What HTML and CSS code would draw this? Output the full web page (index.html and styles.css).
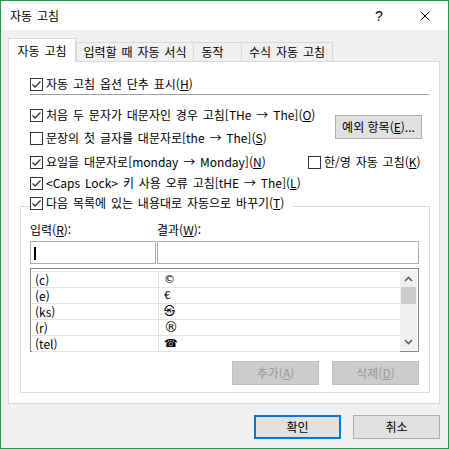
FILE: index.html
```html
<!DOCTYPE html>
<html lang="ko">
<head>
    <meta charset="UTF-8">
    <title>자동 고침</title>
    <link rel="stylesheet" href="styles.css">
</head>
<body>
    <div class="window">
        <div class="titlebar">
            <span class="title">자동 고침</span>
            <span class="cap-btn help">?</span>
            <span class="cap-btn close">
                <svg viewBox="0 0 10 10"><path d="M0.5 0.5l9 9M9.5 0.5l-9 9"/></svg>
            </span>
        </div>

        <div class="body">
            <div class="tabs">
                <div class="tab active tab-auto">자동 고침</div>
                <div class="tab tab-typing">입력할 때 자동 서식</div>
                <div class="tab tab-action">동작</div>
                <div class="tab tab-math">수식 자동 고침</div>
            </div>

            <div class="panel">
                <label class="check first">
                    <span class="cb"><svg viewBox="0 0 11 11"><path d="M1.5 5.5l2.5 2.5 5.5-5.5"/></svg></span>
                    자동 고침 옵션 단추 표시(<u>H</u>)
                </label>
                <div class="sep"></div>

                <div class="options">
                    <label class="check">
                        <span class="cb"><svg viewBox="0 0 11 11"><path d="M1.5 5.5l2.5 2.5 5.5-5.5"/></svg></span>
                        처음 두 문자가 대문자인 경우 고침[THe → The](<u>O</u>)
                    </label>
                    <button class="btn except">예외 항목(<u>E</u>)...</button>
                    <label class="check">
                        <span class="cb off"></span>
                        문장의 첫 글자를 대문자로[the → The](<u>S</u>)
                    </label>
                    <label class="check">
                        <span class="cb"><svg viewBox="0 0 11 11"><path d="M1.5 5.5l2.5 2.5 5.5-5.5"/></svg></span>
                        요일을 대문자로[monday → Monday](<u>N</u>)
                    </label>
                    <label class="check hangul">
                        <span class="cb off"></span>
                        한/영 자동 고침(<u>K</u>)
                    </label>
                    <label class="check wide">
                        <span class="cb"><svg viewBox="0 0 11 11"><path d="M1.5 5.5l2.5 2.5 5.5-5.5"/></svg></span>
                        &lt;Caps Lock&gt; 키 사용 오류 고침[tHE → The](<u>L</u>)
                    </label>
                </div>

                <fieldset class="group">
                    <legend class="check">
                        <span class="cb"><svg viewBox="0 0 11 11"><path d="M1.5 5.5l2.5 2.5 5.5-5.5"/></svg></span>
                        다음 목록에 있는 내용대로 자동으로 바꾸기(<u>T</u>)
                    </legend>

                    <div class="fields">
                        <span>입력(<u>R</u>):</span>
                        <span>결과(<u>W</u>):</span>
                        <div class="input"><span class="caret"></span></div>
                        <div class="input"></div>
                    </div>

                    <div class="list">
                        <div class="rows">
                            <div class="item"><span>(c)</span><span>©</span></div>
                            <div class="item"><span>(e)</span><span>€</span></div>
                            <div class="item"><span>(ks)</span><span>㉿</span></div>
                            <div class="item"><span>(r)</span><span class="big">®</span></div>
                            <div class="item"><span>(tel)</span><span>☎</span></div>
                        </div>
                        <div class="scrollbar">
                            <div class="sb-btn"><svg viewBox="0 0 9 6"><path d="M1 5l3.5-3.5L8 5"/></svg></div>
                            <div class="thumb"></div>
                            <div class="sb-btn down"><svg viewBox="0 0 9 6"><path d="M1 1l3.5 3.5L8 1"/></svg></div>
                        </div>
                    </div>

                    <div class="group-actions">
                        <button class="btn" disabled>추가(<u>A</u>)</button>
                        <button class="btn" disabled>삭제(<u>D</u>)</button>
                    </div>
                </fieldset>
            </div>

            <div class="footer">
                <button class="btn default">확인</button>
                <button class="btn">취소</button>
            </div>
        </div>
    </div>
</body>
</html>
```

FILE: styles.css
```css
* {
    margin: 0;
    padding: 0;
    box-sizing: border-box;
}

body {
    font-family: "Noto Sans CJK KR", sans-serif;
    font-size: 12px;
    line-height: 16px;
    word-spacing: 1.5px;
    color: #000;
    background: #fff;
}

.window {
    width: 449px;
    height: 449px;
    border: 1px solid #1e9a4b;
    background: #f0f0f0;
    display: flex;
    flex-direction: column;
}

/* title bar */
.titlebar {
    height: 29px;
    background: #fff;
    display: flex;
    align-items: center;
    padding-left: 9px;
}

.title {
    flex: 1;
}

.cap-btn {
    width: 46px;
    height: 29px;
    display: flex;
    align-items: center;
    justify-content: center;
}

.help {
    font-family: "Liberation Sans", sans-serif;
    font-size: 14px;
}

.close svg {
    width: 10px;
    height: 10px;
    fill: none;
    stroke: #000;
    stroke-width: 1;
}

.body {
    flex: 1;
    padding: 8px 8px 0 7px;
}

/* tabs */
.tabs {
    display: flex;
    align-items: flex-end;
    height: 23px;
}

.tab {
    height: 19px;
    margin-left: -1px;
    padding-top: 1px;
    border: 1px solid #d9d9d9;
    border-bottom: none;
    background: #f0f0f0;
    text-align: center;
    white-space: nowrap;
}

.tab.active {
    height: 24px;
    margin-bottom: -1px;
    padding-top: 4px;
    background: #fff;
    position: relative;
    z-index: 1;
}

.tab.active,
.tab.active + .tab {
    margin-left: 0;
}

.tab-auto { width: 68px; }
.tab-typing { width: 118px; }
.tab-action { width: 49px; padding-right: 10px; }
.tab-math { width: 92px; }

/* panel */
.panel {
    height: 343px;
    border: 1px solid #d9d9d9;
    background: #fff;
    padding-top: 14px;
}

.check {
    display: flex;
    align-items: center;
    height: 16px;
    white-space: nowrap;
}

.cb {
    flex: none;
    width: 13px;
    height: 13px;
    margin-right: 3px;
    border: 1px solid #333;
    background: #fff;
}

.cb svg {
    display: block;
    width: 11px;
    height: 11px;
    fill: none;
    stroke: #333;
    stroke-width: 1.3;
}

.first {
    margin-left: 21px;
}

.sep {
    height: 1px;
    margin: 2px 10px 0 21px;
    background: #a0a0a0;
}

.options {
    display: grid;
    grid-template-columns: minmax(0, 1fr) 117px;
    grid-template-rows: 22px 24px 24px 18px;
    align-items: center;
    margin: 9px 14px 0 21px;
}

.except {
    grid-column: 2;
    grid-row: 1 / 3;
    justify-self: end;
    margin-right: 3px;
}

.hangul {
    grid-column: 2;
    grid-row: 3;
}

.wide {
    grid-column: 1 / 3;
}

/* replace list group */
.group {
    margin: 3px 9px 0 11px;
    padding: 5px 10px 7px 9px;
    border: 1px solid #dcdcdc;
    min-width: 0;
}

.group legend {
    height: 22px;
    padding: 0 8px 6px 0;
}

.fields {
    display: grid;
    grid-template-columns: 126px 1fr;
    column-gap: 1px;
    row-gap: 3px;
}

.input {
    height: 23px;
    border: 1px solid #abadb3;
    background: #fff;
    padding: 5px 3px;
}

.caret {
    display: block;
    width: 2px;
    height: 13px;
    background: #000;
}

.list {
    display: flex;
    height: 84px;
    margin-top: 4px;
    padding: 1px;
    border: 1px solid #828790;
    background: #fff;
}

.rows {
    flex: 1;
    margin-top: 1px;
    border-top: 1px solid #e3e3e3;
}

.item {
    display: grid;
    grid-template-columns: 127px 1fr;
    height: 16px;
    line-height: 15px;
    border-bottom: 1px solid #e3e3e3;
}

.item span:first-child {
    padding-left: 3px;
    border-right: 1px solid #e3e3e3;
}

.item span:last-child {
    padding-left: 5px;
    font-family: "DejaVu Sans", "Noto Sans CJK KR", sans-serif;
    font-size: 11px;
}

.item span.big {
    font-size: 14px;
}

.scrollbar {
    width: 17px;
    background: #f0f0f0;
    display: flex;
    flex-direction: column;
}

.sb-btn {
    height: 17px;
    display: flex;
    align-items: center;
    justify-content: center;
}

.sb-btn svg {
    width: 9px;
    height: 6px;
    fill: none;
    stroke: #606060;
    stroke-width: 1.7;
}

.sb-btn.down {
    margin-top: auto;
}

.thumb {
    height: 17px;
    margin: 0 1px;
    background: #cdcdcd;
}

.group-actions {
    display: flex;
    justify-content: flex-end;
    gap: 13px;
    margin-top: 9px;
}

/* buttons */
.btn {
    width: 87px;
    height: 24px;
    border: 1px solid #adadad;
    background: #e1e1e1;
    font: inherit;
    color: #000;
}

.btn:disabled {
    background: #cccccc;
    border-color: #bfbfbf;
    color: #9a9a9a;
}

.btn.default {
    border: 2px solid #0078d7;
}

.footer {
    display: flex;
    justify-content: flex-end;
    gap: 12px;
    margin-top: 11px;
}
```
